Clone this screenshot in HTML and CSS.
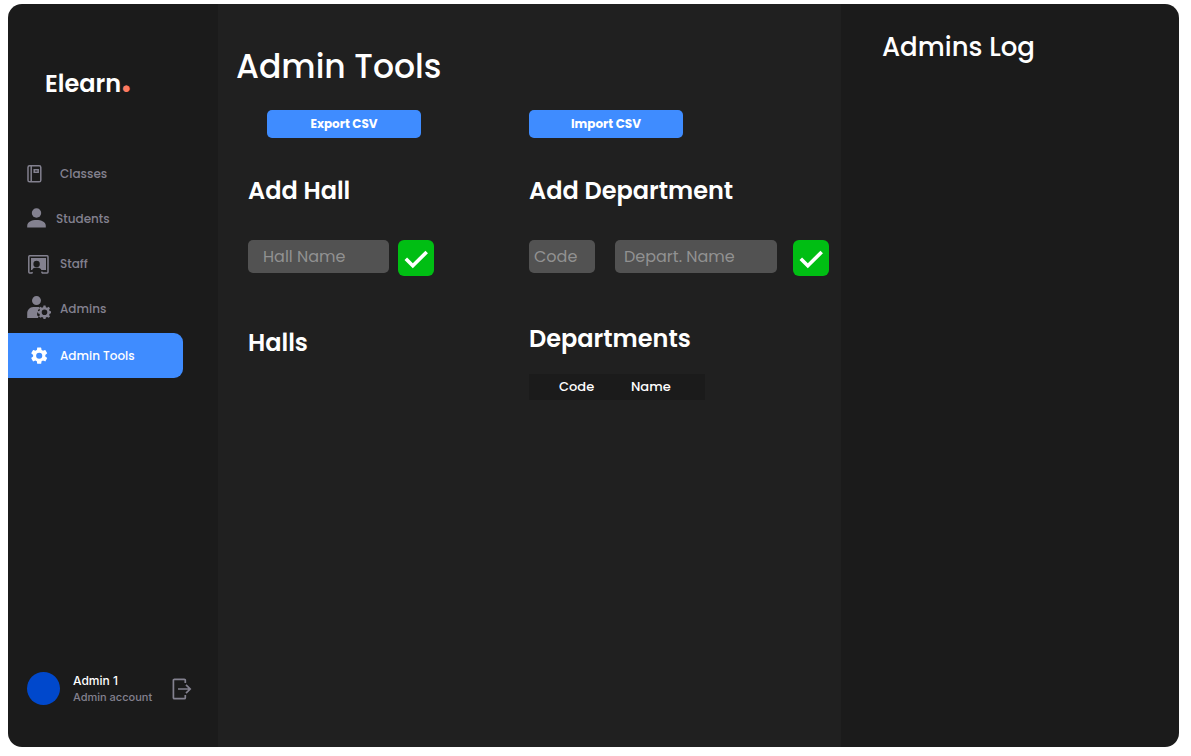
FILE: index.html
```html
<!DOCTYPE html>
<html lang="en">
<head>
<meta charset="utf-8">
<meta name="viewport" content="width=device-width, initial-scale=1">
<title>Elearn - Admin Tools</title>
<link rel="stylesheet" href="styles.css">
</head>
<body>
<div class="app">
  <aside class="sidebar">
    <div class="logo">Elearn<span class="logo-dot">.</span></div>
    <nav class="nav">
      <a class="nav-link" href="#classes">
        <svg class="icon" width="24" height="24" viewBox="0 0 24 24" fill="none" stroke="currentColor" stroke-width="1.5"><rect x="1" y="3.800" width="12.800" height="16" rx="1.600"/><path d="M4.200 4v16M7.200 7.800h4v2.400h-4z"/></svg>
        Classes
      </a>
      <a class="nav-link" href="#students">
        <svg class="icon" width="20" height="24" viewBox="0 0 20 24" fill="currentColor"><circle cx="9.500" cy="6" r="4.700"/><path d="M.2 20.500v-1.600c0-4 4.500-5.900 9.300-5.900s9.300 1.900 9.300 5.900v1.600z"/></svg>
        Students
      </a>
      <a class="nav-link" href="#staff">
        <svg class="icon" width="24" height="24" viewBox="0 0 24 24"><path d="M5.600 20.300l-.7.600H2.700q-.9 0-.9-.9V4.700q0-.9.900-.9h17.400q.9 0 .9.900V20q0 .9-.9.900h-4.700l-.9-1.300" fill="none" stroke="currentColor" stroke-width="1.500"/><path fill-rule="evenodd" d="M4 6h15v12h-4.600c-.4-1.500-2.300-2.500-4.700-2.500s-3.900.8-4.600 2.500H4zM9.600 8.700a3.200 3.200 0 1 0 0 6.400 3.200 3.200 0 0 0 0-6.400z" fill="currentColor"/></svg>
        Staff
      </a>
      <a class="nav-link" href="#admins">
        <svg class="icon" width="24" height="26" viewBox="0 0 24 26" fill="currentColor"><circle cx="9.500" cy="4.600" r="4.500"/><path d="M.2 22v-4.300c0-3.700 2.500-6.700 6.100-6.700h5.900l.3 1.300-1.700 2.200 1 1.500-1.700.5v3l1.600.8-.7 1.700z"/><path fill-rule="evenodd" d="m14.900 11.700 1.200-.5.400-1.700h2l.4 1.700 1.200.5 1.500-.9 1.400 1.400-.9 1.500.5 1.200 1.700.4v2l-1.700.4-.5 1.200.9 1.500-1.400 1.400-1.500-.9-1.200.5-.4 1.700h-2l-.4-1.700-1.200-.5-1.500.9-1.400-1.400.9-1.500-.5-1.200-1.700-.4v-2l1.700-.4.5-1.200-.9-1.500 1.400-1.400zM17.500 13.500a2.800 2.800 0 1 0 0 5.600 2.800 2.800 0 0 0 0-5.600z"/></svg>
        Admins
      </a>
      <a class="nav-link active" href="#tools" aria-current="page">
        <svg class="icon" width="24" height="24" viewBox="0 0 24 24"><path transform="translate(2 1.500) scale(.85)" fill="currentColor" d="M19.140 12.940c.04-.3.060-.61.060-.94s-.02-.64-.07-.94l2.030-1.580a.5.500 0 0 0 .12-.61l-1.920-3.320a.5.500 0 0 0-.59-.22l-2.390.96c-.5-.38-1.030-.7-1.620-.94l-.36-2.540a.5.500 0 0 0-.48-.41h-3.840c-.24 0-.43.170-.47.410l-.36 2.540c-.59.240-1.130.570-1.620.940l-2.390-.96a.5.500 0 0 0-.59.220L2.740 8.870c-.12.210-.08.470.12.610l2.030 1.580c-.05.300-.09.630-.09.940s.02.640.07.940l-2.030 1.580a.5.500 0 0 0-.12.610l1.920 3.320c.12.220.37.290.59.220l2.390-.96c.5.380 1.030.7 1.620.94l.36 2.540c.05.240.24.410.48.410h3.840c.24 0 .44-.17.470-.41l.36-2.540c.59-.24 1.130-.56 1.620-.94l2.390.96c.22.080.47 0 .59-.22l1.920-3.320a.5.500 0 0 0-.12-.61zM12 15.600A3.600 3.600 0 1 1 12 8.400a3.600 3.600 0 0 1 0 7.200z"/></svg>
        Admin Tools
      </a>
    </nav>
    <div class="account">
      <span class="avatar"></span>
      <div class="account-text">
        <div class="account-name">Admin 1</div>
        <div class="account-role">Admin account</div>
      </div>
      <button class="logout" type="button" aria-label="Log out">
        <svg class="icon" width="20" height="22" viewBox="0 0 20 22" fill="none" stroke="currentColor" stroke-width="1.700"><path d="M13.300 5V2.300q0-1-1-1H2.400q-1 0-1 1v17.400q0 1 1 1h9.900q1 0 1-1V17M6 11h12M14 6.800l4.200 4.200-4.200 4.200"/></svg>
      </button>
    </div>
  </aside>

  <main class="main">
    <h1 class="title">Admin Tools</h1>
    <div class="columns">
      <div class="column halls">
        <button class="csv" type="button">Export CSV</button>
        <h2 class="heading">Add Hall</h2>
        <form class="form hall-form">
          <input class="field hall-name" type="text" placeholder="Hall Name" aria-label="Hall Name">
          <button class="confirm" type="button" aria-label="Add hall"><svg class="icon" width="36" height="36" viewBox="0 0 36 36" fill="none" stroke="#fff" stroke-width="3.600"><path d="M7.800 18.800l7 7L28.700 12"/></svg></button>
        </form>
        <h2 class="heading list-heading">Halls</h2>
      </div>
      <div class="column">
        <button class="csv" type="button">Import CSV</button>
        <h2 class="heading">Add Department</h2>
        <form class="form department-form">
          <input class="field code" type="text" placeholder="Code" aria-label="Department code">
          <input class="field department-name" type="text" placeholder="Depart. Name" aria-label="Department name">
          <button class="confirm" type="button" aria-label="Add department"><svg class="icon" width="36" height="36" viewBox="0 0 36 36" fill="none" stroke="#fff" stroke-width="3.600"><path d="M7.800 18.800l7 7L28.700 12"/></svg></button>
        </form>
        <h2 class="heading list-heading">Departments</h2>
        <table class="table">
          <thead><tr><th scope="col">Code</th><th scope="col">Name</th></tr></thead>
        </table>
      </div>
    </div>
  </main>

  <aside class="log">
    <h2 class="log-title">Admins Log</h2>
  </aside>
</div>
</body>
</html>
```
FILE: styles.css
```css
* {
  box-sizing: border-box;
}

body {
  margin: 0;
  padding: 4px 12px 9px 8px;
  background: #fff;
  color: #fff;
  font-family: Poppins, Inter, sans-serif;
  font-weight: 500;
}

button,
input {
  font-family: inherit;
}

button {
  padding: 0;
  border: 0;
  cursor: pointer;
}

h1,
h2 {
  margin: 0;
  font-weight: 500;
}

.icon {
  display: block;
  flex: none;
}

.app {
  display: grid;
  grid-template-columns: 210px minmax(0, 1fr) 338px;
  min-height: calc(100vh - 13px);
  overflow: hidden;
  border-radius: 14px;
  background: #1b1b1b;
}

.sidebar {
  display: flex;
  flex-direction: column;
  padding: 64px 0 42px;
}

.logo {
  padding-left: 37px;
  font-size: 24px;
  font-weight: 600;
  line-height: 32px;
}

.logo-dot {
  color: #fe7a61;
  font-family: Lato, sans-serif;
  font-size: 44px;
  font-weight: 700;
  line-height: 0;
}

.nav {
  display: flex;
  flex-direction: column;
  margin-top: 51px;
}

.nav-link {
  display: flex;
  align-items: center;
  gap: 9px;
  height: 45px;
  margin-right: 35px;
  padding-left: 19px;
  color: #83818f;
  font-size: 12px;
  line-height: 18px;
  text-decoration: none;
}

.nav-link.active {
  margin-top: 2px;
  border-radius: 0 9px 9px 0;
  background: #3f8cff;
  color: #fff;
}

.account {
  display: flex;
  align-items: center;
  margin-top: auto;
  padding: 0 26px 0 19px;
}

.avatar {
  width: 33px;
  height: 33px;
  border-radius: 50%;
  background: #0048cc;
}

.account-text {
  flex: 1;
  margin-left: 13px;
  font-family: Inter, sans-serif;
  line-height: 16px;
}

.account-name {
  font-size: 12px;
}

.account-role {
  color: #83818f;
  font-size: 11px;
}

.logout {
  background: none;
  color: #83818f;
}

.main {
  padding: 43px 12px 42px 18px;
  background: #202020;
}

.title {
  font-size: 33px;
  line-height: 40px;
}

.columns {
  display: grid;
  grid-template-columns: 293px minmax(0, 1fr);
  margin-top: 23px;
}

.column {
  display: flex;
  flex-direction: column;
  align-items: flex-start;
}

.halls {
  padding-left: 12px;
}

.csv {
  width: 154px;
  height: 28px;
  border-radius: 5px;
  background: #3f8cff;
  color: #fff;
  font-size: 12px;
  font-weight: 700;
}

.halls .csv {
  margin-left: 19px;
}

.heading {
  margin-top: 37px;
  font-size: 24px;
  font-weight: 600;
  line-height: 32px;
}

.form {
  display: flex;
  align-items: flex-start;
  margin-top: 33px;
}

.hall-form {
  gap: 9px;
}

.department-form {
  gap: 16px;
}

.field {
  height: 33px;
  border: 0;
  border-radius: 5px;
  background: #525252;
  color: #fff;
  font-size: 16px;
}

.field::placeholder {
  color: #919191;
  opacity: 1;
}

.hall-name {
  width: 141px;
  padding: 0 15px;
}

.code {
  width: 66px;
  margin-right: 4px;
  padding: 0 5px;
}

.department-name {
  width: 162px;
  padding: 0 9px;
}

.confirm {
  width: 36px;
  height: 36px;
  border-radius: 6px;
  background: #00be13;
}

.list-heading {
  margin-top: 47px;
}

.halls .list-heading {
  margin-top: 51px;
}

.table {
  width: 176px;
  margin-top: 19px;
  border-collapse: collapse;
  background: #1b1b1b;
  font-size: 13px;
  line-height: 26px;
}

.table th {
  padding: 0 0 0 30px;
  font-weight: 500;
  text-align: left;
}

.table th:first-child {
  width: 72px;
}

.log {
  padding: 27px 41px;
}

.log-title {
  font-size: 26px;
  line-height: 32px;
}
```
